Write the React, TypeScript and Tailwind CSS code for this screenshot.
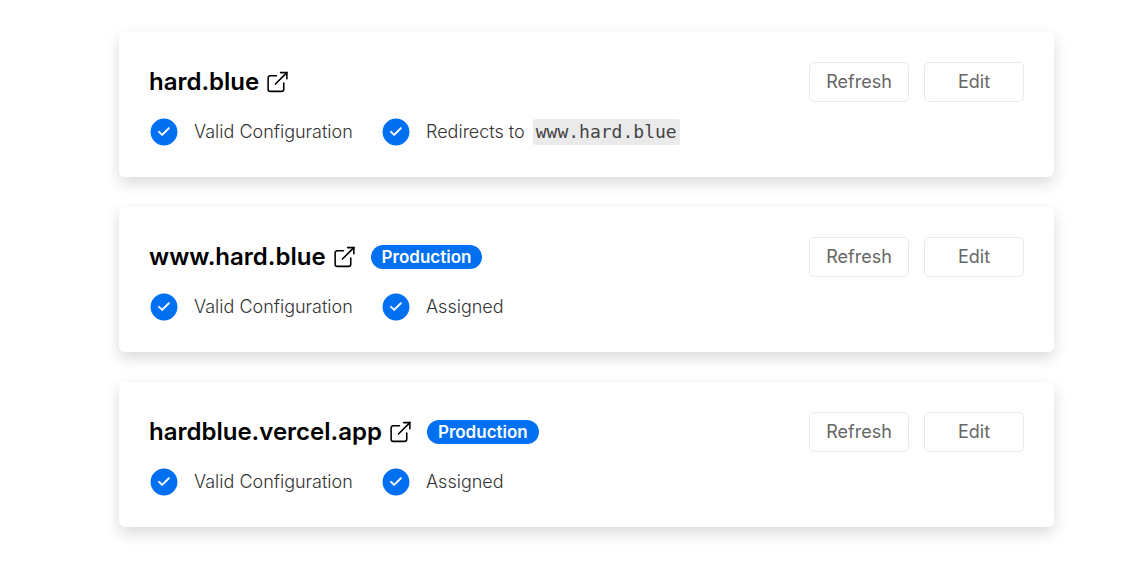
import React from "react";

type Domain = {
  name: string;
  production: boolean;
  redirect?: string;
};

const domains: Domain[] = [
  { name: "hard.blue", production: false, redirect: "www.hard.blue" },
  { name: "www.hard.blue", production: true },
  { name: "hardblue.vercel.app", production: true },
];

function ExternalIcon() {
  return (
    <svg className="size-[25px]" viewBox="0 0 24 24" fill="none" stroke="currentColor" strokeWidth="1.5" strokeLinecap="round" strokeLinejoin="round" aria-hidden="true">
      <path d="M18 12.5v6a2 2 0 01-2 2H5a2 2 0 01-2-2v-11a2 2 0 012-2h6" />
      <path d="M15 2.5h6v6" strokeLinejoin="miter" />
      <path d="M10 13.5l11-11" />
    </svg>
  );
}

function CheckIcon() {
  return (
    <svg className="size-[30px] shrink-0" viewBox="0 0 24 24" fill="none" strokeWidth="1.5" strokeLinecap="round" strokeLinejoin="round" aria-hidden="true">
      <circle cx="12" cy="12" r="10" fill="#0070f3" stroke="#0070f3" />
      <path d="M8 11.857l2.5 2.5L15.857 9" stroke="#fff" />
    </svg>
  );
}

function ActionButton({ children }: { children: string }) {
  return (
    <button type="button" className="h-10 w-[100px] rounded-[5px] border border-[#eaeaea] bg-white text-lg text-[#666]">
      {children}
    </button>
  );
}

function DomainCard({ name, production, redirect }: Domain) {
  return (
    <section className="rounded-[6px] bg-white p-[30px] shadow-[0_6px_15px_rgba(0,0,0,0.15)]">
      <div className="flex items-center justify-between">
        <div className="flex items-center gap-[14px]">
          <a href={"https://" + name} className="flex items-center gap-[6px] text-2xl leading-10 font-semibold text-black">
            {name}
            <ExternalIcon />
          </a>
          {production && (
            <span className="rounded-full bg-[#0070f3] px-[11px] text-[17px] leading-6 font-semibold text-white">Production</span>
          )}
        </div>
        <div className="flex gap-[15px]">
          <ActionButton>Refresh</ActionButton>
          <ActionButton>Edit</ActionButton>
        </div>
      </div>
      <div className="mt-[15px] flex h-[30px] items-center text-lg font-light text-[#333]">
        <div className="flex w-[232px] items-center gap-[15px]">
          <CheckIcon />
          Valid Configuration
        </div>
        <div className="flex items-center gap-[15px]">
          <CheckIcon />
          {redirect ? (
            <span className="flex items-center gap-2">
              Redirects to
              <code className="rounded-[3px] bg-[#eaeaea] px-[3px] font-['DejaVu_Sans_Mono',monospace] text-lg leading-[26px] font-normal text-[#444]">{redirect}</code>
            </span>
          ) : (
            "Assigned"
          )}
        </div>
      </div>
    </section>
  );
}

export default function App() {
  return (
    <main className="mr-[83px] ml-[119px] flex flex-col gap-[30px] py-8 font-['Inter',sans-serif]">
      {domains.map((d) => (
        <DomainCard key={d.name} {...d} />
      ))}
    </main>
  );
}
